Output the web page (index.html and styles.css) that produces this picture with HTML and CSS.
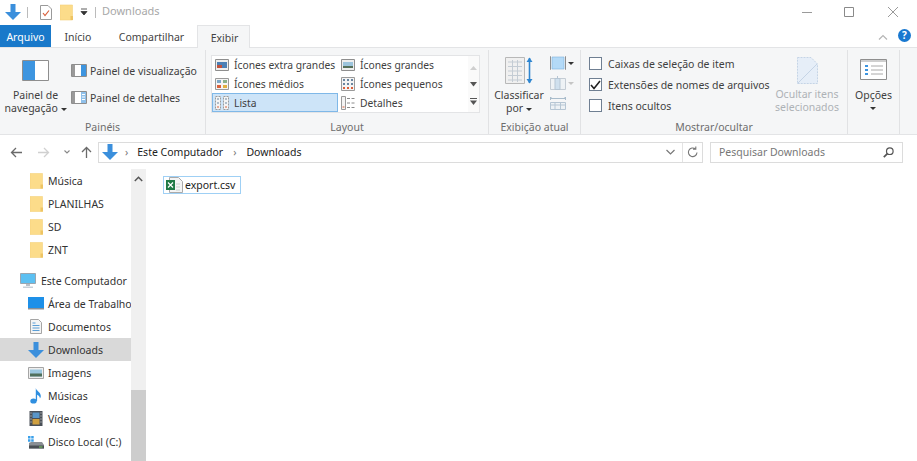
FILE: index.html
```html
<!DOCTYPE html>
<html lang="pt-BR">
<head>
    <meta charset="UTF-8">
    <title>Downloads</title>
    <link rel="stylesheet" href="styles.css">
</head>
<body>
    <svg class="defs" width="0" height="0">
        <symbol id="i-down" viewBox="0 0 16 16"><path d="M5.500 0h5v8H16l-8 8-8-8h5.500z" fill="#3b8fdc"/></symbol>
        <symbol id="i-folder" viewBox="0 0 13 16"><path d="M0 .5h12.500v15H0z" fill="#fcdc8a" stroke="#f3d27a" stroke-width=".6"/><path d="M10.500 11.500h2.500v4h-2.500z" fill="#eec463"/></symbol>
    </svg>

    <div class="titlebar">
        <svg class="tb-down" width="16" height="16"><use href="#i-down"/></svg>
        <span class="tb-sep"></span>
        <svg class="tb-check" width="12" height="15" viewBox="0 0 12 15"><path d="M.5.500h7.500l3.500 3.500v10.500H.5z" fill="#fff" stroke="#9a9a9a"/><path d="M3 8l2 2.500 4-5" fill="none" stroke="#d9603c" stroke-width="1.200"/></svg>
        <svg class="tb-folder" width="13" height="17"><use href="#i-folder"/></svg>
        <svg class="tb-drop" width="8" height="8" viewBox="0 0 8 8"><path d="M1 1h6M1 3.500h6L4 7z" stroke="#333" fill="#333" stroke-width=".8"/></svg>
        <span class="tb-sep tb-sep2"></span>
        <span class="tb-title">Downloads</span>
        <div class="winbtns">
            <svg width="10" height="10" viewBox="0 0 10 10"><path d="M0 5.500h10" stroke="#9a9a9a"/></svg>
            <svg width="10" height="10" viewBox="0 0 10 10"><path d="M.5.500h9v9h-9z" fill="none" stroke="#8a8a8a"/></svg>
            <svg width="10" height="10" viewBox="0 0 10 10"><path d="M0 0l10 10M10 0L0 10" stroke="#9a9a9a"/></svg>
        </div>
    </div>

    <div class="tabs">
        <span class="tab tab-file">Arquivo</span>
        <span class="tab tab-inicio">Início</span>
        <span class="tab tab-share">Compartilhar</span>
        <span class="tab tab-active">Exibir</span>
        <svg class="tabs-up" width="10" height="6" viewBox="0 0 10 6"><path d="M1 5.500l4-4 4 4" fill="none" stroke="#b5b5b5" stroke-width="1.200"/></svg>
        <span class="help">?</span>
    </div>

    <div class="ribbon">
        <section class="group g-paineis">
            <div class="group-body">
                <div class="big-btn nav-btn">
                    <svg width="27" height="21" viewBox="0 0 27 21"><path d="M.5.500h26v20H.5z" fill="#fff" stroke="#8e8e8e"/><path d="M1 1h12v19H1z" fill="#3d95e0"/></svg>
                    <span class="big-label">Painel de<br>navegação <i class="caret"></i></span>
                </div>
                <div class="pane-list">
                    <div class="pane-item">
                        <svg width="16" height="13" viewBox="0 0 16 13"><path d="M.5.500h15v12H.5z" fill="#fff" stroke="#8e8e8e"/><path d="M1 1h3v11H1z" fill="#9a9a9a"/><path d="M10 1h5v11h-5z" fill="#3d95e0"/></svg>
                        Painel de visualização
                    </div>
                    <div class="pane-item">
                        <svg width="16" height="13" viewBox="0 0 16 13"><path d="M.5.500h15v12H.5z" fill="#fff" stroke="#8e8e8e"/><path d="M1 1h3v11H1z" fill="#9a9a9a"/><path d="M10 1h5v11h-5z" fill="#8fc0ea"/><path d="M11 3.500h3M11 6h3M11 8.500h3" stroke="#fff"/></svg>
                        Painel de detalhes
                    </div>
                </div>
            </div>
            <div class="group-name">Painéis</div>
        </section>

        <section class="group g-layout">
            <div class="group-body">
                <div class="gallery">
                    <div class="gallery-grid">
                        <div class="g-item">
                            <svg width="14" height="12" viewBox="0 0 14 12"><path d="M.5.500h13v11H.5z" fill="#eee" stroke="#8e8e8e"/><path d="M2 3h10v6H2z" fill="#4a7fb5"/><path d="M2 6h5v3H2z" fill="#c0503c"/></svg>
                            Ícones extra grandes
                        </div>
                        <div class="g-item">
                            <svg width="14" height="12" viewBox="0 0 14 12"><path d="M.5.500h13v11H.5z" fill="#eee" stroke="#8e8e8e"/><path d="M2 3h10v6H2z" fill="#9cc4dc"/><path d="M2 7h10v2H2z" fill="#56705a"/></svg>
                            Ícones grandes
                        </div>
                        <div class="g-item">
                            <svg width="14" height="12" viewBox="0 0 14 12"><path d="M.5.500h13v11H.5z" fill="#f4f4f4" stroke="#9a9a9a"/><path d="M2 2h4v3H2z" fill="#7da7c8"/><path d="M8 2h4v3H8z" fill="#8ab08a"/><path d="M2 7h4v3H2z" fill="#d9603c"/><path d="M8 7h4v3H8z" fill="#e0b040"/></svg>
                            Ícones médios
                        </div>
                        <div class="g-item">
                            <svg width="14" height="14" viewBox="0 0 14 14"><path d="M.5.500h13v13H.5z" fill="#f4f4f4" stroke="#9a9a9a"/><path d="M2 2h2v2H2zM6 2h2v2H6zM10 2h2v2h-2zM2 6h2v2H2zM6 6h2v2H6zM10 6h2v2h-2z" fill="#6a86a0"/><path d="M2 10h2v2H2zM6 10h2v2H6zM10 10h2v2h-2z" fill="#d9603c"/></svg>
                            Ícones pequenos
                        </div>
                        <div class="g-item g-sel">
                            <svg width="14" height="14" viewBox="0 0 14 14"><path d="M.5.500h5v13h-5zM8.500.500h5v13h-5z" fill="#f4f4f4" stroke="#9a9a9a" stroke-dasharray="2 1"/><path d="M2 3h2M2 7h2M10 3h2M10 7h2" stroke="#6a86a0"/><path d="M2 11h2M10 11h2" stroke="#d9603c"/></svg>
                            Lista
                        </div>
                        <div class="g-item">
                            <svg width="14" height="14" viewBox="0 0 14 14"><path d="M.5.500h4v13h-4z" fill="#f4f4f4" stroke="#9a9a9a"/><path d="M6 2.500h3M10.500 2.500h3M6 7h3M10.500 7h3M6 11.500h3M10.500 11.500h3" stroke="#8a8a8a"/><path d="M1.500 11h2" stroke="#d9603c"/></svg>
                            Detalhes
                        </div>
                    </div>
                    <div class="gallery-scroll">
                        <svg width="7" height="5" viewBox="0 0 7 5"><path d="M0 5l3.500-4L7 5z" fill="#cfcfcf"/></svg>
                        <svg width="7" height="5" viewBox="0 0 7 5"><path d="M0 0h7L3.500 4.500z" fill="#555"/></svg>
                        <svg width="7" height="7" viewBox="0 0 7 7"><path d="M0 .5h7" stroke="#555"/><path d="M0 2.500h7L3.500 7z" fill="#555"/></svg>
                    </div>
                </div>
            </div>
            <div class="group-name">Layout</div>
        </section>

        <section class="group g-view">
            <div class="group-body">
                <div class="big-btn sort-btn">
                    <svg width="28" height="27" viewBox="0 0 28 27"><path d="M.5.500h19v26H.5z" fill="#f0f0f0" stroke="#b8b8b8"/><path d="M3 5h14M3 9.500h14M3 14h14M3 18.500h14M3 23h14M7.500 3v22M12.500 3v22" stroke="#c4ccd4"/><path d="M24.500 1v25" stroke="#2f86d0" stroke-width="1.600"/><path d="M21.500 5l3-4.500 3 4.500zM21.500 22l3 4.500 3-4.500z" fill="#2f86d0"/></svg>
                    <span class="big-label">Classificar<br>por <i class="caret"></i></span>
                </div>
                <div class="view-tools">
                    <div class="tool">
                        <svg width="16" height="14" viewBox="0 0 16 14"><path d="M1 .5H.5v13H1M15 .5h.5v13H15" fill="none" stroke="#8e8e8e"/><path d="M2 1h12v12H2z" fill="#b4daf7" stroke="#7cb3de" stroke-width=".6"/></svg>
                        <i class="caret"></i>
                    </div>
                    <div class="tool dim">
                        <svg width="16" height="14" viewBox="0 0 16 14"><path d="M.5 2.500h15v11H.5z" fill="#eef2f5" stroke="#c4ccd4"/><path d="M5 2.500h5v11H5z" fill="#cfe0ee" stroke="#b6c6d4"/><path d="M7.500 0v2" stroke="#b6c6d4"/></svg>
                        <i class="caret"></i>
                    </div>
                    <div class="tool dim">
                        <svg width="16" height="14" viewBox="0 0 16 14"><path d="M.5 2.500h15M2 2.500L.5 1v3M14 2.500L15.500 1v3" fill="none" stroke="#a9bccb"/><path d="M.5 6.500h15v7H.5zM.5 9h15M5 6.500v7M10.500 6.500v7" fill="#eef2f5" stroke="#b6c6d4"/></svg>
                    </div>
                </div>
            </div>
            <div class="group-name">Exibição atual</div>
        </section>

        <section class="group g-show">
            <div class="group-body">
                <div class="checks">
                    <label class="check"><span class="box"></span>Caixas de seleção de item</label>
                    <label class="check"><span class="box"><svg width="11" height="10" viewBox="0 0 11 10"><path d="M1 5l3 3.500L10 1" fill="none" stroke="#222" stroke-width="1.600"/></svg></span>Extensões de nomes de arquivos</label>
                    <label class="check"><span class="box"></span>Itens ocultos</label>
                </div>
                <div class="big-btn hide-btn">
                    <svg width="21" height="27" viewBox="0 0 21 27"><path d="M.5.500h13.500l6.500 6.500v19.500H.5z" fill="#e6eef8" stroke="#c5d4e6" stroke-dasharray="2 1"/><path d="M.5 26.500L20 7" stroke="#c5d4e6"/></svg>
                    <span class="big-label">Ocultar itens<br>selecionados</span>
                </div>
            </div>
            <div class="group-name">Mostrar/ocultar</div>
        </section>

        <section class="group g-options">
            <div class="group-body">
                <div class="big-btn opt-btn">
                    <svg width="27" height="21" viewBox="0 0 27 21"><path d="M.5.500h26v20H.5z" fill="#fff" stroke="#8e8e8e"/><path d="M1 1h25v2H1z" fill="#cfcfcf"/><path d="M5 6h3v2H5zM5 10h3v2H5zM5 14h3v2H5z" fill="#3d95e0"/><path d="M11 7h12M11 11h12M11 15h12" stroke="#aaa"/></svg>
                    <span class="big-label opt-label">Opções<br><i class="caret"></i></span>
                </div>
            </div>
        </section>
    </div>

    <div class="addressbar">
        <svg width="12" height="11" viewBox="0 0 12 11"><path d="M12 5.500H1.500M6 1L1.500 5.500 6 10" fill="none" stroke="#6a6a6a" stroke-width="1.300"/></svg>
        <svg class="nav-fwd" width="12" height="11" viewBox="0 0 12 11"><path d="M0 5.500h10.500M6 1l4.500 4.500L6 10" fill="none" stroke="#d0d0d0" stroke-width="1.300"/></svg>
        <svg class="nav-hist" width="6" height="4" viewBox="0 0 6 4"><path d="M.5.500L3 3 5.500.5" fill="none" stroke="#888" stroke-width="1.100"/></svg>
        <svg class="nav-up" width="11" height="12" viewBox="0 0 11 12"><path d="M5.500 12V1.500M1 6l4.500-4.500L10 6" fill="none" stroke="#6a6a6a" stroke-width="1.300"/></svg>
        <div class="address">
            <svg width="16" height="16"><use href="#i-down"/></svg>
            <span class="crumb-sep">›</span>
            <span class="crumb">Este Computador</span>
            <span class="crumb-sep">›</span>
            <span class="crumb">Downloads</span>
            <svg class="addr-drop" width="9" height="6" viewBox="0 0 9 6"><path d="M.5 1l4 4 4-4" fill="none" stroke="#777" stroke-width="1.200"/></svg>
            <span class="addr-refresh">
                <svg width="11" height="12" viewBox="0 0 11 12"><path d="M8.500 3A4.300 4.300 0 1 0 10 6.500M8.800.5V3.300H6" fill="none" stroke="#777" stroke-width="1.100"/></svg>
            </span>
        </div>
        <div class="search">
            <span>Pesquisar Downloads</span>
            <svg width="11" height="11" viewBox="0 0 11 11"><circle cx="6.800" cy="4.200" r="3.300" fill="none" stroke="#555" stroke-width="1.200"/><path d="M4.400 6.600L.8 10.200" stroke="#555" stroke-width="1.700"/></svg>
        </div>
    </div>

    <div class="main">
        <nav class="sidebar">
            <div class="nav-row"><svg width="13" height="16"><use href="#i-folder"/></svg>Música</div>
            <div class="nav-row"><svg width="13" height="16"><use href="#i-folder"/></svg>PLANILHAS</div>
            <div class="nav-row"><svg width="13" height="16"><use href="#i-folder"/></svg>SD</div>
            <div class="nav-row"><svg width="13" height="16"><use href="#i-folder"/></svg>ZNT</div>
            <div class="nav-row nav-pc">
                <svg width="16" height="16" viewBox="0 0 16 16"><path d="M.5.500h15v10H.5z" fill="#5cc0f2" stroke="#9aa6b0"/><path d="M6 11h4v2H6z" fill="#b8c0c8"/><path d="M3 13.500h10v1.500H3z" fill="#c8d0d8"/></svg>
                Este Computador
            </div>
            <div class="nav-row"><svg width="16" height="13" viewBox="0 0 16 13"><path d="M0 0h16v11H0z" fill="#1e90e8"/><path d="M0 11h16v1.500H0z" fill="#8a8f94"/></svg>Área de Trabalho</div>
            <div class="nav-row"><svg width="16" height="15" viewBox="-2 0 16 15"><path d="M.5.500h8l3 3v11H.5z" fill="#f4f4f4" stroke="#a5a5a5"/><path d="M2.500 4h3M2.500 6.500h7M2.500 9h7M2.500 11.500h7" stroke="#5b9ed6"/></svg>Documentos</div>
            <div class="nav-row nav-sel"><svg width="16" height="16"><use href="#i-down"/></svg>Downloads</div>
            <div class="nav-row"><svg width="16" height="12" viewBox="0 0 16 12"><path d="M.5.500h15v11H.5z" fill="#eee" stroke="#a5a5a5"/><path d="M2 2.500h12v7H2z" fill="#9cc8e0"/><path d="M2 6.500h12v3H2z" fill="#50705c"/></svg>Imagens</div>
            <div class="nav-row"><svg width="16" height="16" viewBox="-2 0 16 16"><ellipse cx="3.500" cy="13" rx="3.200" ry="2.600" fill="#2f8fe0"/><path d="M5.800 13V0c.5 3 5 4 5 8 0 1-.4 2-.9 2.500.3-2-1.800-3.500-2.800-3.800V13z" fill="#2f8fe0"/></svg>Músicas</div>
            <div class="nav-row"><svg width="16" height="15" viewBox="-1.500 0 16 15"><path d="M0 0h13v15H0z" fill="#4a5058"/><path d="M3 1.500h7v5.500H3z" fill="#5a96c8"/><path d="M3 8h7v5.500H3z" fill="#d0a040"/><path d="M1 2h1M1 5h1M1 8h1M1 11h1M11 2h1M11 5h1M11 8h1M11 11h1" stroke="#ddd"/></svg>Vídeos</div>
            <div class="nav-row"><svg width="16" height="14" viewBox="0 0 16 14"><path d="M0 1h2.500v2.500H0zM3.200 1h2.500v2.500H3.200zM0 4.200h2.500v2.500H0zM3.200 4.200h2.500v2.500H3.200z" fill="#3aa0ea"/><path d="M1 8l2-1h11l2 3v3.500H1z" fill="#8a8f94"/><path d="M1 10.500h15v3H1z" fill="#4a4f54"/><path d="M11 11.500h3.500v1H11z" fill="#7ad060"/></svg>Disco Local (C:)</div>
        </nav>
        <div class="nav-scroll">
            <svg width="9" height="6" viewBox="0 0 9 6"><path d="M.8 5L4.500 1.300 8.200 5" fill="none" stroke="#555" stroke-width="1.500"/></svg>
            <span class="nav-thumb"></span>
        </div>
        <div class="files">
            <div class="file">
                <svg width="17" height="16" viewBox="0 0 17 16"><path d="M3.500.500h9l4 4v11h-13z" fill="#f4f4f4" stroke="#aaa"/><path d="M10 7h4M10 10h4M10 13h4" stroke="#c8d4cc"/><path d="M0 3h9v10H0z" fill="#1f7a45"/><path d="M2 5.500l5 5M7 5.500l-5 5" stroke="#fff" stroke-width="1.200"/></svg>
                export.csv
            </div>
        </div>
    </div>
</body>
</html>
```

FILE: styles.css
```css
html, body {
    margin: 0;
    padding: 0;
    background: #fff;
    height: 461px;
    overflow: hidden;
}
body {
    font-family: "Noto Sans", "Open Sans", sans-serif;
    font-size: 10.5px;
    color: #3f3f3f;
}
svg { display: block; flex: none; }
.defs { position: absolute; }

/* title bar */
.titlebar {
    height: 24px;
    display: flex;
    align-items: center;
}
.tb-down { margin-left: 5px; }
.tb-sep { width: 1px; height: 11px; background: #bbb; margin-left: 6px; }
.tb-check { margin-left: 12px; }
.tb-folder { margin-left: 8px; }
.tb-drop { margin-left: 7px; }
.tb-sep2 { margin-left: 7px; }
.tb-title { margin-left: 6px; padding-bottom: 3px; color: #a8a8a8; font-size: 11px; }
.winbtns {
    margin-left: auto;
    margin-right: 19px;
    display: flex;
    align-items: center;
    gap: 32px;
}
.winbtns svg:last-child { margin-left: 2px; }

/* tabs */
.tabs {
    height: 24px;
    display: flex;
    align-items: stretch;
    border-bottom: 1px solid #e3e4e6;
    box-sizing: border-box;
}
.tab {
    display: flex;
    align-items: center;
    justify-content: center;
    color: #444;
    padding-top: 2px;
    box-sizing: border-box;
}
.tab-file { width: 51px; margin-top: 1px; padding-top: 1px; background: #1979ca; color: #fff; }
.tab-inicio { width: 53px; padding-left: 1px; }
.tab-share { width: 93px; padding-left: 2px; }
.tab-active {
    width: 53px;
    margin-top: 1px;
    padding-top: 1px;
    padding-left: 2px;
    border: 1px solid #e3e4e6;
    border-bottom: none;
    background: #f5f6f7;
    height: 23px;
}
.tabs-up { margin: 10px 0 0 auto; }
.help {
    margin: 5px 6px 0 10px;
    width: 13px;
    height: 13px;
    border-radius: 50%;
    background: #1878d0;
    color: #fff;
    font-size: 10px;
    font-weight: 700;
    line-height: 13px;
    text-align: center;
}

/* ribbon */
.ribbon {
    height: 87px;
    background: #f5f6f7;
    border-bottom: 1px solid #e3e4e6;
    box-sizing: border-box;
    display: flex;
}
.group {
    display: flex;
    flex-direction: column;
    border-right: 1px solid #e1e2e4;
    margin-top: 2px;
    box-sizing: border-box;
}
.group-body { flex: 1; min-height: 0; display: flex; }
.group-name {
    height: 14px;
    line-height: 14px;
    text-align: center;
    color: #6d6d6d;
}
.g-paineis { width: 206px; }
.g-layout { width: 283px; }
.g-view { width: 92px; }
.g-show { width: 267px; }
.g-options { width: 52px; }

.big-btn {
    display: flex;
    flex-direction: column;
    align-items: center;
}
.big-label { text-align: center; line-height: 13px; }
.caret {
    display: inline-block;
    border: 3px solid transparent;
    border-top-color: #333;
    border-bottom: none;
    vertical-align: middle;
}
.nav-btn { width: 71px; padding-top: 10px; box-sizing: border-box; }
.nav-btn .big-label { margin-top: 8px; }
.pane-list { padding-top: 7px; }
.pane-item {
    height: 27px;
    display: flex;
    align-items: center;
    gap: 3px;
    white-space: nowrap;
}

.gallery {
    margin: 5px 0 0 5px;
    width: 269px;
    height: 58px;
    background: #fff;
    border: 1px solid #e3e4e6;
    box-sizing: border-box;
    display: flex;
}
.gallery-grid {
    width: 256px;
    margin-top: -1px;
    display: grid;
    grid-template-columns: 126px 130px;
    grid-auto-rows: 19px;
    font-size: 10.3px;
}
.g-item {
    display: flex;
    align-items: center;
    gap: 5px;
    padding-left: 3px;
    white-space: nowrap;
}
.g-sel { background: #cde4f8; box-shadow: inset 0 0 0 1px #7fb8e8; }
.gallery-scroll {
    flex: 1;
    display: flex;
    flex-direction: column;
    align-items: center;
    justify-content: space-between;
    padding: 9px 0 7px;
    background: #fafafa;
}

.sort-btn { width: 60px; padding-top: 7px; }
.sort-btn .big-label { margin-top: 5px; }
.view-tools { padding-top: 3px; margin-left: 1px; }
.tool { height: 20px; display: flex; align-items: center; gap: 2px; }
.tool.dim .caret { border-top-color: #c5c5c5; }

.checks { width: 183px; padding: 3px 0 0 8px; }
.check {
    height: 21px;
    display: flex;
    align-items: center;
    gap: 6px;
    white-space: nowrap;
}
.box {
    width: 11px;
    height: 11px;
    background: #fff;
    border: 1px solid #6f7f92;
    display: flex;
    align-items: center;
    justify-content: center;
}
.hide-btn { width: 70px; padding-top: 7px; color: #aeb2b6; }
.hide-btn .big-label { margin-top: 4px; }
.opt-btn { width: 100%; padding-top: 9px; }
.opt-label { margin-top: 9px; line-height: 12px; }

/* address bar */
.addressbar {
    height: 34px;
    display: flex;
    align-items: center;
    padding-left: 10px;
}
.nav-fwd { margin-left: 16px; }
.nav-hist { margin-left: 14px; }
.nav-up { margin-left: 11px; }
.address {
    margin-left: 6px;
    width: 605px;
    height: 21px;
    border: 1px solid #dcdcdc;
    box-sizing: border-box;
    display: flex;
    align-items: center;
    padding-left: 3px;
    color: #222;
}
.crumb-sep { margin: 0 9px 0 7px; color: #777; }
.crumb + .crumb-sep { margin: 0 10px; }
.addr-drop { margin-left: auto; margin-right: 7px; }
.addr-refresh {
    border-left: 1px solid #e3e3e3;
    height: 19px;
    width: 19px;
    display: flex;
    align-items: center;
    justify-content: center;
}
.search {
    margin-left: 7px;
    width: 193px;
    height: 21px;
    border: 1px solid #dcdcdc;
    box-sizing: border-box;
    display: flex;
    align-items: center;
    justify-content: space-between;
    padding: 0 8px;
    color: #777;
}

/* main */
.main {
    height: 292px;
    display: flex;
}
.sidebar { width: 131px; flex: none; overflow: hidden; }
.nav-row {
    height: 23px;
    display: flex;
    align-items: center;
    padding-left: 30px;
    gap: 5px;
    white-space: nowrap;
    color: #333;
    box-sizing: border-box;
}
.nav-pc { margin-top: 8px; padding-left: 20px; }
.nav-row:nth-child(n+6) { padding-left: 28px; gap: 4px; }
.nav-sel { background: #d9d9d9; }
.nav-scroll {
    width: 15px;
    flex: none;
    background: #f0f0f0;
    display: flex;
    flex-direction: column;
    align-items: center;
    padding-top: 7px;
    box-sizing: border-box;
}
.nav-thumb {
    margin-top: auto;
    width: 100%;
    height: 71px;
    background: #cdcdcd;
}
.files { flex: 1; padding: 7px 0 0 17px; }
.file {
    width: 78px;
    height: 18px;
    border: 1px solid #9fd0f5;
    box-sizing: border-box;
    display: flex;
    align-items: center;
    gap: 2px;
    padding-left: 2px;
    color: #222;
}
```
